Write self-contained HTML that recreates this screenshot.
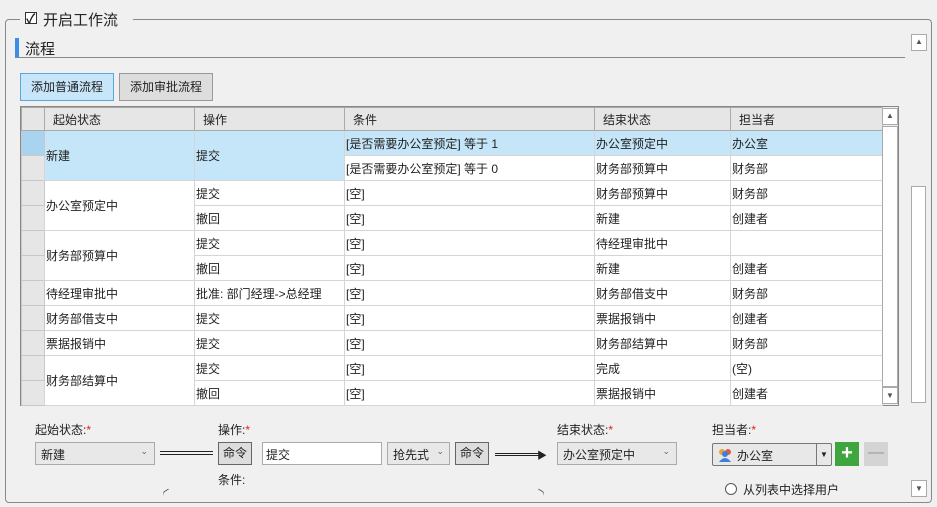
<!DOCTYPE html>
<html><head><meta charset="utf-8"><style>
*{box-sizing:border-box}
body{margin:0;width:937px;height:507px;background:#f0f0f0;font-family:"Liberation Sans","Noto Sans CJK SC",sans-serif;font-size:12px;color:#222;position:relative;overflow:hidden}
.a{position:absolute}
table{border-collapse:collapse;table-layout:fixed}
td{border:1px solid #d5d5d5;height:25px;padding:0 0 0 1px;white-space:nowrap;overflow:hidden;background:#fff;font-size:12px}
th{border:1px solid #aaa;height:23px;background:#e6e6e6;font-weight:normal;text-align:left;padding-left:8px;font-size:12px}
td.rh{background:#e6e6e6;border-color:#c8c8c8}
.sel td{background:#c5e5f8}
td.bl{background:#c5e5f8}
.btn{border:1px solid #999;background:#ddd;text-align:center}
.sb{border:1px solid #aaa;background:#fff}
.red{color:#e02020}
</style></head><body>
<!-- fieldset frame -->
<div class="a" style="left:5px;top:19px;width:927px;height:484px;border:1px solid #888;border-radius:4px"></div>
<div class="a" style="left:20px;top:6px;width:113px;height:24px;background:#f0f0f0"></div>
<div class="a" style="left:25px;top:12px;width:12px;height:12px;border:1px solid #333;background:#fff"></div>
<div class="a" style="left:26px;top:8px;font-size:13px;font-weight:bold">✓</div>
<div class="a" style="left:43px;top:9px;font-size:15px">开启工作流</div>
<!-- section title -->
<div class="a" style="left:15px;top:37px;width:890px;height:21px;border-bottom:1px solid #888"></div>
<div class="a" style="left:15px;top:38px;width:4px;height:19px;background:#3a8ee6"></div>
<div class="a" style="left:25px;top:38px;font-size:15px">流程</div>
<!-- buttons -->
<div class="a btn" style="left:20px;top:73px;width:94px;height:28px;line-height:26px;background:#c7e6fa;border-color:#5aa7dc">添加普通流程</div>
<div class="a btn" style="left:119px;top:73px;width:94px;height:28px;line-height:26px">添加审批流程</div>
<!-- grid -->
<div class="a" style="left:20px;top:106px;width:879px;height:300px;border:1px solid #888;background:#fff"></div>
<table class="a" style="left:21px;top:107px;width:861px">
<colgroup><col style="width:23px"><col style="width:150px"><col style="width:150px"><col style="width:250px"><col style="width:136px"><col style="width:152px"></colgroup>
<tr><th></th><th>起始状态</th><th>操作</th><th>条件</th><th>结束状态</th><th>担当者</th></tr>
<tr class="sel"><td class="rh" style="background:#a9d4ef"></td><td rowspan="2">新建</td><td rowspan="2">提交</td><td>[是否需要办公室预定] 等于 1</td><td>办公室预定中</td><td>办公室</td></tr>
<tr><td class="rh"></td><td>[是否需要办公室预定] 等于 0</td><td>财务部预算中</td><td>财务部</td></tr>
<tr><td class="rh"></td><td rowspan="2">办公室预定中</td><td>提交</td><td>[空]</td><td>财务部预算中</td><td>财务部</td></tr>
<tr><td class="rh"></td><td>撤回</td><td>[空]</td><td>新建</td><td>创建者</td></tr>
<tr><td class="rh"></td><td rowspan="2">财务部预算中</td><td>提交</td><td>[空]</td><td>待经理审批中</td><td></td></tr>
<tr><td class="rh"></td><td>撤回</td><td>[空]</td><td>新建</td><td>创建者</td></tr>
<tr><td class="rh"></td><td>待经理审批中</td><td>批准: 部门经理-&gt;总经理</td><td>[空]</td><td>财务部借支中</td><td>财务部</td></tr>
<tr><td class="rh"></td><td>财务部借支中</td><td>提交</td><td>[空]</td><td>票据报销中</td><td>创建者</td></tr>
<tr><td class="rh"></td><td>票据报销中</td><td>提交</td><td>[空]</td><td>财务部结算中</td><td>财务部</td></tr>
<tr><td class="rh"></td><td rowspan="2">财务部结算中</td><td>提交</td><td>[空]</td><td>完成</td><td>(空)</td></tr>
<tr><td class="rh"></td><td>撤回</td><td>[空]</td><td>票据报销中</td><td>创建者</td></tr>
</table>
<style>.sel td.bl{}</style>
<!-- inner scrollbar -->
<div class="a" style="left:882px;top:107px;width:16px;height:298px;background:#f0f0f0;border-left:1px solid #ccc"></div>
<div class="a sb" style="left:882px;top:108px;width:16px;height:17px;font-size:8px;text-align:center;line-height:14px;color:#555">▲</div>
<div class="a sb" style="left:882px;top:126px;width:16px;height:261px"></div>
<div class="a sb" style="left:882px;top:387px;width:16px;height:17px;font-size:8px;text-align:center;line-height:15px;color:#555">▼</div>
<!-- outer scrollbar -->
<div class="a sb" style="left:911px;top:34px;width:16px;height:17px;font-size:8px;text-align:center;line-height:14px;color:#555">▲</div>
<div class="a sb" style="left:911px;top:186px;width:15px;height:217px"></div>
<div class="a sb" style="left:911px;top:480px;width:16px;height:17px;font-size:8px;text-align:center;line-height:15px;color:#555">▼</div>
<!-- bottom form -->
<div class="a" style="left:35px;top:421px">起始状态:<span class="red">*</span></div>
<div class="a" style="left:35px;top:442px;width:120px;height:23px;border:1px solid #aaa;background:#e8e8e8;padding:3px 5px">新建<span style="position:absolute;right:6px;top:3px;font-size:9px;color:#666">⌄</span></div>
<div class="a" style="left:160px;top:451px;width:53px;height:4px;border-top:1px solid #222;border-bottom:1px solid #222"></div>
<div class="a" style="left:218px;top:421px">操作:<span class="red">*</span></div>
<div class="a btn" style="left:218px;top:442px;width:34px;height:23px;line-height:21px;border-color:#666">命令</div>
<div class="a" style="left:262px;top:442px;width:120px;height:23px;border:1px solid #aaa;background:#fff;padding:3px 3px">提交</div>
<div class="a" style="left:387px;top:442px;width:63px;height:23px;border:1px solid #aaa;background:#e8e8e8;padding:3px 5px">抢先式<span style="position:absolute;right:5px;top:3px;font-size:9px;color:#666">⌄</span></div>
<div class="a btn" style="left:455px;top:442px;width:34px;height:23px;line-height:21px;border-color:#666">命令</div>
<div class="a" style="left:218px;top:471px">条件:</div>
<div class="a" style="left:495px;top:453px;width:45px;height:3px;border-top:1px solid #222;border-bottom:1px solid #222"></div>
<div class="a" style="left:537px;top:447px;font-size:10px">▶</div>
<div class="a" style="left:557px;top:421px">结束状态:<span class="red">*</span></div>
<div class="a" style="left:557px;top:442px;width:120px;height:23px;border:1px solid #aaa;background:#e8e8e8;padding:3px 5px">办公室预定中<span style="position:absolute;right:6px;top:3px;font-size:9px;color:#666">⌄</span></div>
<div class="a" style="left:712px;top:421px">担当者:<span class="red">*</span></div>
<div class="a" style="left:712px;top:443px;width:120px;height:23px;border:1px solid #777;border-radius:2px;background:#e8e8e8;padding:3px 4px 3px 24px">办公室
<svg style="position:absolute;left:4px;top:3px" width="16" height="16"><circle cx="5" cy="5" r="3" fill="#e8a33b"/><circle cx="11" cy="5" r="3" fill="#e05a4a"/><circle cx="8" cy="7" r="3" fill="#3f7fd9"/><path d="M2 15q6-8 12 0z" fill="#3f7fd9"/></svg>
<div style="position:absolute;right:0;top:0;width:15px;height:21px;border-left:1px solid #777;font-size:8px;text-align:center;line-height:21px">▼</div></div>
<div class="a" style="left:835px;top:442px;width:24px;height:24px;background:#3fa53f;color:#fff;font-size:20px;font-weight:bold;text-align:center;line-height:23px">+</div>
<div class="a" style="left:864px;top:442px;width:24px;height:24px;background:#d4d4d4;color:#999;font-size:16px;text-align:center;line-height:22px">—</div>
<div class="a" style="left:725px;top:483px;width:12px;height:12px;border:1px solid #555;border-radius:50%;background:#fff"></div>
<div class="a" style="left:743px;top:481px">从列表中选择用户</div>
<div class="a" style="left:163px;top:490px;width:8px;height:8px;border-top:1px solid #555;border-radius:50% 0 0 0;transform:rotate(-30deg)"></div>
<div class="a" style="left:536px;top:490px;width:8px;height:8px;border-top:1px solid #555;border-radius:0 50% 0 0;transform:rotate(30deg)"></div>
</body></html>
